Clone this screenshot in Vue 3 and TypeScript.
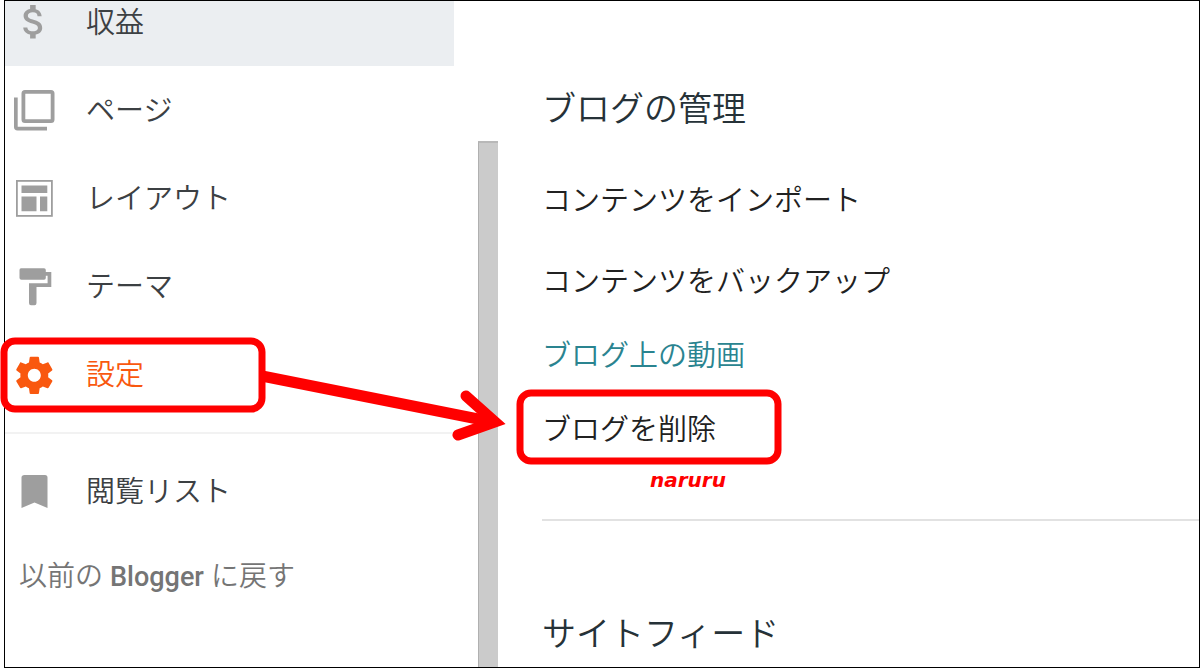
<script setup lang="ts">
interface NavItem {
  id: string
  label: string
  state?: 'hovered' | 'active'
}

const navItems: NavItem[] = [
  { id: 'earnings', label: '収益', state: 'hovered' },
  { id: 'pages', label: 'ページ' },
  { id: 'layout', label: 'レイアウト' },
  { id: 'theme', label: 'テーマ' },
  { id: 'settings', label: '設定', state: 'active' },
  { id: 'reading', label: '閲覧リスト' },
]

const actions: { label: string; kind: 'button' | 'link' }[] = [
  { label: 'コンテンツをインポート', kind: 'button' },
  { label: 'コンテンツをバックアップ', kind: 'button' },
  { label: 'ブログ上の動画', kind: 'link' },
  { label: 'ブログを削除', kind: 'button' },
]
</script>

<template>
  <div class="page">
    <div class="frame">
      <nav class="sidebar">
        <ul class="nav-list">
          <li v-for="item in navItems" :key="item.id" :class="['nav-row', item.id]">
            <a href="#" :class="['nav-link', item.state]">
              <svg class="icon" viewBox="0 0 42 42" aria-hidden="true">
                <path
                  v-if="item.id === 'earnings'"
                  transform="translate(-1.5 -1.5) scale(1.86)"
                  d="M11.8 10.9c-2.27-.59-3-1.2-3-2.15 0-1.09 1.01-1.85 2.7-1.85 1.78 0 2.44.85 2.5 2.1h2.21c-.07-1.72-1.12-3.3-3.21-3.81V3h-3v2.16c-1.94.42-3.5 1.68-3.5 3.61 0 2.31 1.91 3.46 4.7 4.13 2.5.6 3 1.48 3 2.41 0 .69-.49 1.79-2.7 1.79-2.06 0-2.87-.92-2.98-2.1h-2.2c.12 2.19 1.76 3.42 3.68 3.83V21h3v-2.15c1.95-.37 3.5-1.5 3.5-3.55 0-2.84-2.43-3.81-4.7-4.4z"
                />
                <path
                  v-else-if="item.id === 'pages'"
                  fill-rule="evenodd"
                  d="M12 1H38Q41.5 1 41.5 4.5V30.500Q41.5 34 38 34H12Q8.500 34 8.500 30.500V4.500Q8.500 1 12 1ZM12.300 4.800V30.300H37.700V4.800ZM1 8.500H4.700V37.700H34V41.400H4.500Q1 41.400 1 38Z"
                />
                <template v-else-if="item.id === 'layout'">
                  <rect x="3.9" y="3.9" width="35" height="35" fill="none" stroke="currentColor" stroke-width="1.8" />
                  <path d="M8.5 8.5H34.3V16H8.5ZM8.5 19.5H23.5V34.3H8.5ZM27 19.5H34.3V34.3H27Z" />
                </template>
                <path
                  v-else-if="item.id === 'theme'"
                  d="M8 3.300H31Q32.800 3.300 32.800 5.100V7H38.300V22H23.500V38Q23.500 40.300 21.500 40.300H18Q16 40.300 16 38V18.200H34.600V10.800H32.800V13Q32.800 14.800 31 14.800H8.500Q6.500 14.800 6.500 13V5.100Q6.500 3.300 8 3.300Z"
                />
                <path
                  v-else-if="item.id === 'settings'"
                  transform="translate(-1 0) scale(1.86)"
                  d="M19.43 12.98c.04-.32.07-.64.07-.98s-.03-.66-.07-.98l2.11-1.65c.19-.15.24-.42.12-.64l-2-3.46c-.12-.22-.39-.3-.61-.22l-2.49 1c-.52-.4-1.08-.73-1.69-.98l-.38-2.65C14.46 2.18 14.25 2 14 2h-4c-.25 0-.46.18-.49.42l-.38 2.65c-.61.25-1.17.59-1.69.98l-2.49-1c-.23-.09-.49 0-.61.22l-2 3.46c-.13.22-.07.49.12.64l2.11 1.65c-.04.32-.07.65-.07.98s.03.66.07.98l-2.11 1.65c-.19.15-.24.42-.12.64l2 3.46c.12.22.39.3.61.22l2.49-1c.52.4 1.08.73 1.69.98l.38 2.65c.03.24.24.42.49.42h4c.25 0 .46-.18.49-.42l.38-2.65c.61-.25 1.17-.59 1.69-.98l2.49 1c.23.09.49 0 .61-.22l2-3.46c.12-.22.07-.49-.12-.64l-2.11-1.65zM12 15.5c-1.93 0-3.5-1.57-3.5-3.5s1.57-3.5 3.5-3.5 3.5 1.57 3.5 3.5-1.57 3.5-3.5 3.5z"
                />
                <path v-else d="M11.5 5H32Q34.5 5 34.5 7.5V38L21.5 32.5L8.5 38V7.5Q8.5 5 11.5 5Z" />
              </svg>
              <span class="label">{{ item.label }}</span>
            </a>
          </li>
        </ul>
        <a href="#" class="legacy">以前の <span class="brand">Blogger</span> に戻す</a>
      </nav>

      <div class="scroll-track"><div class="thumb"></div></div>

      <main class="content">
        <section class="group">
          <h2>ブログの管理</h2>
          <ul class="actions">
            <li v-for="action in actions" :key="action.label">
              <a v-if="action.kind === 'link'" href="#" class="action link">{{ action.label }}</a>
              <button v-else type="button" class="action">{{ action.label }}</button>
            </li>
          </ul>
        </section>
        <section class="group">
          <h2>サイトフィード</h2>
        </section>
      </main>
    </div>

    <svg class="marks" width="800" height="500">
      <rect x="4" y="341" width="258" height="68" rx="11" />
      <rect x="520" y="393" width="258" height="68" rx="11" />
      <path d="M262 376L488 421" />
      <path d="M466 396L495 422L458 435" stroke-linecap="round" />
      <text x="650" y="487">naruru</text>
    </svg>
  </div>
</template>

<style>
body {
  margin: 0;
  background: #fff;
}
</style>

<style scoped>
.page {
  position: relative;
  padding-left: 4px;
}

.frame {
  box-sizing: border-box;
  display: grid;
  grid-template-columns: 449px 20px minmax(0, 1fr);
  column-gap: 24px;
  height: 100vh;
  border: 1px solid #000;
  overflow: hidden;
  background: #fff;
  color: #3c4043;
  font-family: Roboto, "Noto Sans CJK JP", sans-serif;
  font-size: 29px;
  font-weight: 350;
  line-height: 40px;
}

ul {
  list-style: none;
  margin: 0;
  padding: 0;
}

.sidebar {
  margin-top: -23px;
}

.nav-link {
  display: flex;
  align-items: center;
  gap: 31px;
  height: 88px;
  padding-left: 8px;
  color: #3c4043;
  text-decoration: none;
}

.label {
  padding-top: 2px;
}

.hovered {
  background: #ebeef1;
}

.icon {
  flex: none;
  width: 42px;
  height: 42px;
  color: #9e9e9e;
  fill: currentColor;
}

.active,
.active .icon {
  color: #f9580f;
}

.reading {
  width: 473px;
  margin-top: 14px;
  padding-top: 13px;
  border-top: 2px solid #f2f2f2;
}

.legacy {
  display: flex;
  align-items: center;
  gap: 7px;
  height: 84px;
  padding-left: 14px;
  color: #757575;
  font-size: 28px;
  text-decoration: none;
}

.brand {
  font-size: 27px;
  font-weight: 500;
}

.scroll-track {
  padding-top: 140px;
}

.thumb {
  box-sizing: border-box;
  height: 100%;
  border-top: 2px solid #b8b8b8;
  border-left: 1px solid #b0b0b0;
  background: #cbcbcb;
}

.content {
  padding: 83px 0 0 20px;
}

.group + .group {
  margin-top: 52px;
  padding-top: 88px;
  border-top: 2px solid #e2e2e2;
}

h2 {
  margin: 0;
  color: #263238;
  font-size: 34px;
  font-weight: 350;
  line-height: 50px;
}

.actions {
  padding-top: 30px;
}

.actions li {
  display: flex;
  align-items: center;
  height: 74px;
}

.actions li:first-child {
  margin-bottom: 7px;
}

.action {
  padding: 0;
  border: 0;
  background: none;
  color: #212121;
  font: inherit;
  text-decoration: none;
}

.link {
  color: #2a8490;
}

.marks {
  position: absolute;
  top: 0;
  left: 0;
  fill: none;
  stroke: #f00;
  stroke-width: 7px;
  pointer-events: none;
}

.marks path {
  stroke-width: 11px;
}

.marks text {
  fill: #f00;
  stroke: none;
  font-family: "DejaVu Sans", sans-serif;
  font-size: 20px;
  font-style: italic;
  font-weight: 700;
}
</style>
